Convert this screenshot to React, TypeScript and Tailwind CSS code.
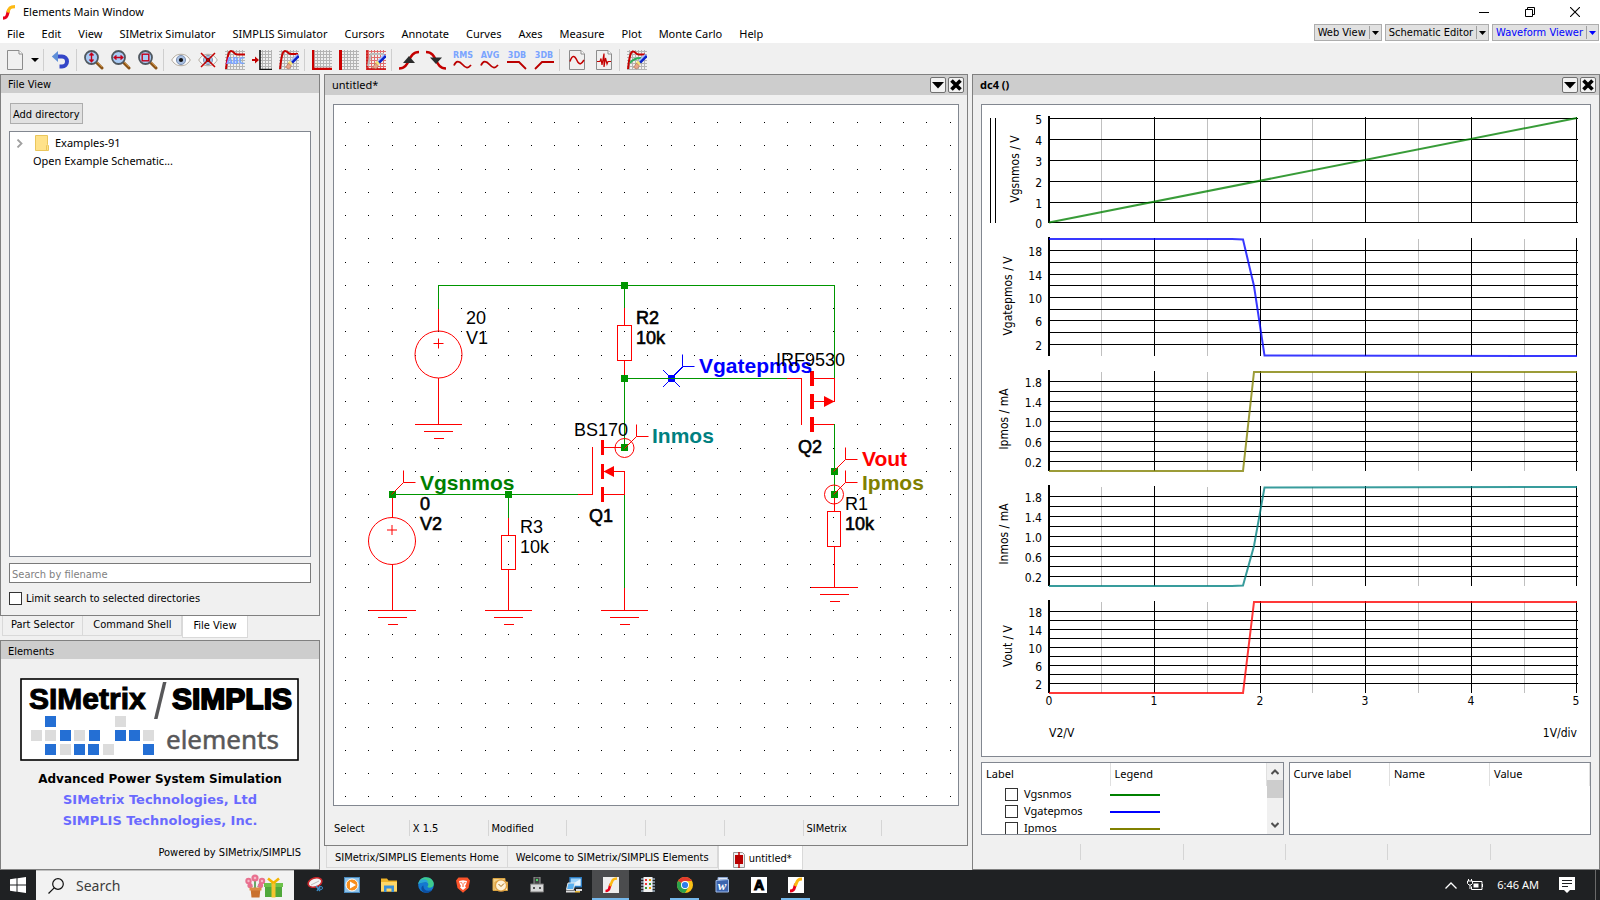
import type { ReactNode } from "react";

const UI = "font-['Noto_Sans','Segoe_UI',sans-serif] text-[11px]";
const TAHOMA = "font-['DejaVu_Sans_Condensed','Tahoma',sans-serif] text-[11px]";

const MENUS = [
  "File", "Edit", "View", "SIMetrix Simulator", "SIMPLIS Simulator", "Cursors", "Annotate",
  "Curves", "Axes", "Measure", "Plot", "Monte Carlo", "Help",
];

/* ---------- toolbar icons (20 x 20) ---------- */

function Icon({ children }: { children: ReactNode }) {
  return (
    <svg viewBox="0 0 20 20" className="block h-5 w-5" aria-hidden="true">
      {children}
    </svg>
  );
}

function Mesh({ x = 0, color = "#b4b4b4", width = 20 }: { x?: number; color?: string; width?: number }) {
  const xs: number[] = [];
  for (let i = x + 2; i < x + width; i += 3) xs.push(i);
  return (
    <g fill={color} shapeRendering="crispEdges">
      {xs.map((v) => <rect key={v} x={v} y="0" width="1" height="20" />)}
      {[1, 4, 7, 10, 13, 16, 19].map((v) => <rect key={v} x={x} y={v} width={width} height="1" />)}
    </g>
  );
}

function Page() {
  return (
    <>
      <path d="M2.500 .5h11.500l3.500 3.500v15.500h-15z" fill="#f0f0f0" stroke="#8c8c8c" />
      <path d="M14 .5v3.500h3.500" fill="#fff" stroke="#8c8c8c" />
    </>
  );
}

function Lens({ children }: { children: ReactNode }) {
  return (
    <Icon>
      <path d="M12.500 12.500L18 18" stroke="#8a5418" strokeWidth="3" strokeLinecap="round" />
      <path d="M13 12L18 17" stroke="#c98a3c" strokeWidth="1" />
      <circle cx="7.500" cy="7.500" r="6.500" fill="#a9cbf5" stroke="#505860" strokeWidth="1.800" />
      <g stroke="#c4001a" fill="none" strokeWidth="1.400">{children}</g>
    </Icon>
  );
}

function Brush() {
  return (
    <>
      <path d="M19.500 5.500L12 13" stroke="#0a22c8" strokeWidth="3.600" />
      <path d="M18.500 4.500L11 12" stroke="#a9c0ff" strokeWidth="1.400" />
      <path d="M12.500 12L10 14.500" stroke="#f4e27a" strokeWidth="4" />
      <path d="M9.500 13l3 3l-2.500 3l-3.500 -1.500z" fill="#e8a58c" stroke="#a06040" strokeWidth=".5" />
    </>
  );
}

function Eye() {
  return (
    <>
      <path d="M.7 10C4 4.800 7 4.300 10 4.300S16 4.800 19.300 10C16 15.200 13 15.700 10 15.700S4 15.200 .7 10z" fill="#fbfbfb" stroke="#b0a89c" />
      <circle cx="10" cy="10" r="4.600" fill="#a9bfe0" stroke="#6f84a8" strokeWidth=".8" />
      <circle cx="10" cy="10" r="2.100" fill="#101010" />
    </>
  );
}

const RED = "#c40000";

function Label({ children }: { children: ReactNode }) {
  return (
    <text x="10" y="7.500" textAnchor="middle" fontFamily="DejaVu Sans" fontWeight="700" fontSize="8" fill="#7aa4ff">
      {children}
    </text>
  );
}

const WAVE = "M1 15.500C3 10.500 6 10.500 9.500 14.500S15 18.500 18 15";

const GROUPS: { name: string; icon: ReactNode }[][] = [
  [{
    name: "Undo",
    icon: <Icon><path d="M5 6.500H11A4.700 4.700 0 0 1 11 16.500H8.500" fill="none" stroke="#3446c8" strokeWidth="4" /><path d="M7 1V12L.8 6.500z" fill="#5f8fd8" /></Icon>,
  }],
  [
    { name: "Zoom vertical", icon: <Lens><path d="M7.500 3.500V11.500M5.500 5.500L7.500 3.200L9.500 5.500M5.500 9.500L7.500 11.800L9.500 9.500" /></Lens> },
    { name: "Zoom horizontal", icon: <Lens><path d="M3.500 7.500H11.500M5.500 5.500L3.200 7.500L5.500 9.500M9.500 5.500L11.800 7.500L9.500 9.500" /></Lens> },
    { name: "Zoom box", icon: <Lens><rect x="4.200" y="4.200" width="6.600" height="6.600" /></Lens> },
  ],
  [
    { name: "Show curves", icon: <Icon><Eye /></Icon> },
    { name: "Hide curves", icon: <Icon><Eye /><path d="M3 3L17 17M17 3L3 17" stroke={RED} strokeWidth="1.500" /></Icon> },
    { name: "Name curve", icon: <Icon><Mesh /><path d="M1 19C2 10 3 1 6 1S9 5 13 4.500H20" fill="none" stroke={RED} strokeWidth="2" /><text x="10.500" y="14" textAnchor="middle" fontFamily="DejaVu Sans" fontWeight="700" fontSize="8" fill="#7aa4ff">ABC</text></Icon> },
    { name: "New axis", icon: <Icon><Mesh x={8} width={12} /><path d="M8 0V19.500H20" fill="none" stroke="#111" strokeWidth="1.600" /><path d="M0 9H3V6.500L7 10L3 13.500V11H0z" fill={RED} /></Icon> },
    { name: "Delete curve", icon: <Icon><Mesh /><path d="M1 19C2 10 3 1 6 1S9 4.500 13 4H19" fill="none" stroke={RED} strokeWidth="2" /><Brush /></Icon> },
  ],
  [
    { name: "New grid", icon: <Icon><Mesh /><path d="M1 0V19H20" fill="none" stroke="#c00" strokeWidth="2.400" /></Icon> },
    { name: "Add y axis", icon: <Icon><Mesh /><path d="M1.500 0V20" stroke="#c00" strokeWidth="3" /></Icon> },
    { name: "Erase grid", icon: <Icon><Mesh color="#e06c6c" /><path d="M1 0V19H20" fill="none" stroke="#c00" strokeWidth="1.500" /><path d="M2 16L5 4H18" stroke="#bbb" fill="none" strokeWidth="2" /><Brush /></Icon> },
  ],
  [
    { name: "Rise time", icon: <Icon><path d="M0 18.500C12 18.500 8 2 20 2" fill="none" stroke={RED} strokeWidth="2.600" /><path d="M10 6L16 13H4z" fill="#2c2c2c" /></Icon> },
    { name: "Fall time", icon: <Icon><path d="M0 2C12 2 8 18.500 20 18.500" fill="none" stroke={RED} strokeWidth="2.600" /><path d="M10 14L16 7.500H4z" fill="#2c2c2c" /></Icon> },
    { name: "RMS", icon: <Icon><Label>RMS</Label><path d={WAVE} fill="none" stroke="#b00" strokeWidth="1.800" /></Icon> },
    { name: "Average", icon: <Icon><Label>AVG</Label><path d={WAVE} fill="none" stroke="#b00" strokeWidth="1.800" /></Icon> },
    { name: "Low pass 3dB", icon: <Icon><Label>3DB</Label><path d="M0 12H12L19 19" fill="none" stroke="#b00" strokeWidth="1.800" /></Icon> },
    { name: "High pass 3dB", icon: <Icon><Label>3DB</Label><path d="M20 12H8L1 19" fill="none" stroke="#b00" strokeWidth="1.800" /></Icon> },
  ],
  [
    { name: "New waveform", icon: <Icon><Page /><path d="M3 11.500C5 5 7.500 5 10 10.500S14.500 14 17 10" fill="none" stroke={RED} strokeWidth="1.500" /></Icon> },
    { name: "New spectrum", icon: <Icon><Page /><path d="M3 11.500H6L7 8.500L8 15L10 3.500V17L11.500 8L13 14L14 11.500H17" fill="none" stroke={RED} strokeWidth="1.200" /></Icon> },
  ],
  [
    { name: "Clear all", icon: <Icon><Mesh /><path d="M1 19C2 10 3 1.500 6 1.500S9 5 12 4.500H18" fill="none" stroke={RED} strokeWidth="2" /><path d="M3 13C6 9 9 8 14 8" fill="none" stroke="#2fae5a" strokeWidth="2" /><Brush /></Icon> },
  ],
];

function Divider() {
  return <div className="ml-0.5 mr-[3px] h-[22px] w-px shrink-0 bg-[#cfcfcf]" />;
}

function Toolbar() {
  return (
    <div className="flex h-[31px] shrink-0 items-center bg-[#f0f0f0] pl-px pt-0.5">
      <button aria-label="New" className="flex h-6 w-[27px] items-center justify-center"><Icon><Page /></Icon></button>
      <button aria-label="New options" className="flex h-6 w-[13px] items-center justify-center">
        <svg viewBox="0 0 8 4" className="h-1 w-2"><path d="M0 0h8l-4 4z" /></svg>
      </button>
      {GROUPS.map((group) => (
        <div key={group[0].name} className="flex items-center">
          <Divider />
          {group.map((tool) => (
            <button key={tool.name} aria-label={tool.name} className="flex h-6 w-[27px] items-center justify-center">
              {tool.icon}
            </button>
          ))}
        </div>
      ))}
    </div>
  );
}

/* ---------- header ---------- */

function Swoosh({ className }: { className: string }) {
  return (
    <svg viewBox="0 0 12 15" className={className} aria-hidden="true">
      <path d="M0 13.200C5.500 13.200 4 8 5.800 5" fill="none" stroke="#e8001c" strokeWidth="3.200" />
      <path d="M4.900 7.500C6 3 7 1.700 12 1.700" fill="none" stroke="#fdb913" strokeWidth="3.200" />
    </svg>
  );
}

function ViewButton({ label, active = false }: { label: string; active?: boolean }) {
  const color = active ? "text-[#0000ff]" : "text-black";
  return (
    <div className={`flex h-[17px] items-center border border-[#adadad] bg-[#e1e1e1] ${color} ${TAHOMA}`}>
      <button className="h-full px-[3px] leading-[15px]">{label}</button>
      <button aria-label={`${label} options`} className="flex h-[13px] w-3 items-center justify-center border-l border-[#a0a0a0]">
        <svg viewBox="0 0 7 4" className="h-1 w-[7px]" fill="currentColor"><path d="M0 0h7l-3.500 4z" /></svg>
      </button>
    </div>
  );
}

function Header() {
  return (
    <header className="shrink-0 bg-white">
      <div className="flex h-6 items-center pl-[3px]">
        <Swoosh className="h-[15px] w-3" />
        <h1 className={`ml-2 flex-1 ${UI}`}>Elements Main Window</h1>
        <div className="flex h-5 items-center">
          <button aria-label="Minimize" className="flex w-[46px] justify-center"><svg viewBox="0 0 10 10" className="h-2.5 w-2.5"><path d="M0 5.500h10" stroke="#000" /></svg></button>
          <button aria-label="Restore" className="flex w-[45px] justify-center"><svg viewBox="0 0 10 10" className="h-2.5 w-2.5" fill="none" stroke="#000"><path d="M.5 2.500h7v7h-7zM2.500 2.500v-2h7v7h-2" /></svg></button>
          <button aria-label="Close" className="flex w-[46px] justify-center"><svg viewBox="0 0 10 10" className="h-2.5 w-2.5"><path d="M0 0L10 10M10 0L0 10" stroke="#000" strokeWidth="1.100" /></svg></button>
          <div className="w-0.5" />
        </div>
      </div>
      <div className="flex h-[19px] items-center justify-between">
        <nav className={`flex gap-[17px] pl-[7px] ${UI}`}>
          {MENUS.map((m) => <button key={m} className="whitespace-nowrap leading-4">{m}</button>)}
        </nav>
        <div className="mb-0.5 flex gap-[3px] pr-px">
          <ViewButton label="Web View" />
          <ViewButton label="Schematic Editor" />
          <ViewButton label="Waveform Viewer" active />
        </div>
      </div>
    </header>
  );
}

/* ---------- panels ---------- */

function PanelTitle({ title, bold = false }: { title: string; bold?: boolean }) {
  return (
    <div className="flex h-5 shrink-0 items-center gap-0.5 bg-[#cdcdcd] pl-[7px] pr-[3px]">
      <h2 className={`flex-1 ${UI} ${bold ? "font-bold" : ""}`}>{title}</h2>
      <button aria-label={`${title} menu`} className="flex h-4 w-4 items-center justify-center rounded-xs border border-[#707070] bg-[#f2f2f2]">
        <svg viewBox="0 0 12 7" className="h-[7px] w-3"><path d="M0 0h12l-6 6.500z" /></svg>
      </button>
      <button aria-label={`Close ${title}`} className="flex h-4 w-4 items-center justify-center rounded-xs border border-[#707070] bg-[#f2f2f2]">
        <svg viewBox="0 0 12 12" className="h-3 w-3"><path d="M1.500 1.500L10.500 10.500M10.500 1.500L1.500 10.500" stroke="#000" strokeWidth="3.600" /></svg>
      </button>
    </div>
  );
}

function Tab({ label, size, icon, active = false }: { label: string; size: string; icon?: ReactNode; active?: boolean }) {
  return (
    <button
      role="tab"
      aria-selected={active}
      className={`flex items-center gap-1 whitespace-nowrap border border-t-0 border-[#d9d9d9] ${size} ${TAHOMA} ${active ? "bg-white" : "border-l-0 bg-[#f0f0f0] first:border-l"}`}
    >
      {icon}
      {label}
    </button>
  );
}

const TILES: [number, number, boolean][] = [
  [45, 716, true], [115, 716, false],
  [31, 730, false], [45, 730, false], [60, 730, true], [74, 730, false], [89, 730, true], [115, 730, true], [129, 730, true], [143, 730, false],
  [45, 744, true], [60, 744, false], [74, 744, true], [88, 744, true], [103, 744, false], [143, 744, true],
];

function Logo() {
  return (
    <svg viewBox="20 678 279 83" className="mr-px block h-[83px] w-[279px]" role="img" aria-label="SIMetrix / SIMPLIS elements">
      <rect x="21" y="679" width="277" height="81" fill="#fff" stroke="#000" strokeWidth="1.600" />
      <text x="29" y="709" fontFamily="Liberation Sans" fontWeight="700" fontSize="30" stroke="#000" strokeWidth="1">SIMetrix</text>
      <path d="M163 682h3.500l-9 37h-3.500z" fill="#58585a" />
      <text x="172" y="709" fontFamily="Liberation Sans" fontWeight="700" fontSize="30" stroke="#000" strokeWidth="1.800" strokeLinejoin="round">SIMPLIS</text>
      {TILES.map(([x, y, blue]) => (
        <rect key={`${x}-${y}`} x={x} y={y} width="11" height="11" fill={blue ? "#246fd4" : "#dcdcdc"} />
      ))}
      <text x="166" y="749" fontFamily="Noto Sans" fontWeight="400" fontSize="26" fill="#58585a" stroke="#58585a" strokeWidth=".5">elements</text>
    </svg>
  );
}

function LeftColumn() {
  return (
    <div className="flex min-h-0 flex-col">
      <section className="flex min-h-0 flex-1 flex-col border border-[#808080]">
        <h2 className={`flex h-[18px] shrink-0 items-center bg-[#cdcdcd] pl-[7px] pt-0.5 ${TAHOMA}`}>File View</h2>
        <div className="flex min-h-0 flex-1 flex-col px-2 pb-2.5 pt-2.5">
          <button className={`ml-px h-[21px] self-start whitespace-nowrap border border-[#adadad] bg-[#e1e1e1] px-0.5 pt-0.5 leading-4 ${TAHOMA}`}>Add directory</button>
          <ul className={`mt-[7px] flex-1 border border-[#828790] bg-white ${UI}`}>
            <li className="flex h-5 items-center pl-1.5 pt-0.5">
              <svg viewBox="0 0 7 9" className="h-[9px] w-[7px]" fill="none"><path d="M1.500 .5L5.500 4.500L1.500 8.500" stroke="#a0a0a0" strokeWidth="1.800" /></svg>
              <svg viewBox="0 0 14 16" className="ml-3 h-4 w-3.5"><path d="M.5 .5h12v9l1 1v5h-13z" fill="#ffe28a" stroke="#eac65c" /><path d="M11.500 15v-4.500h1" stroke="#eac65c" fill="none" /></svg>
              <span className="ml-[6px]">Examples-91</span>
            </li>
            <li className="h-[18px] pl-[23px] leading-[17px]">Open Example Schematic...</li>
          </ul>
          <input
            aria-label="Search by filename"
            placeholder="Search by filename"
            className={`mt-1.5 h-5 w-full border border-[#7a7a7a] bg-white px-0.5 pt-0.5 outline-none placeholder:text-[#7f7f7f] ${TAHOMA}`}
          />
          <label className={`mt-2 flex h-3.5 items-center gap-1 leading-4 ${TAHOMA}`}>
            <input type="checkbox" className="h-[13px] w-[13px] appearance-none border border-[#333] bg-white" />
            <span className="pt-0.5">Limit search to selected directories</span>
          </label>
        </div>
      </section>
      <div role="tablist" className="flex h-6 shrink-0 items-start pl-0.5">
        <Tab label="Part Selector" size="h-5 px-2" />
        <Tab label="Command Shell" size="h-5 px-2.5" />
        <Tab label="File View" size="h-[22px] px-2.5" active />
      </div>
      <section className="flex h-[230px] shrink-0 flex-col border border-[#808080]">
        <h2 className={`flex h-[18px] shrink-0 items-center bg-[#cdcdcd] pl-[7px] pt-1 ${TAHOMA}`}>Elements</h2>
        <div className="flex flex-1 flex-col items-center pt-[19px] font-['DejaVu_Sans','Verdana',sans-serif] text-[13px] font-bold">
          <Logo />
          <p className="mt-2 text-xs leading-5">Advanced Power System Simulation</p>
          <p className="leading-[21px] text-[#6a6aff]">SIMetrix Technologies, Ltd</p>
          <p className="leading-[21px] text-[#6a6aff]">SIMPLIS Technologies, Inc.</p>
          <p className={`mt-3.5 self-end pr-[18px] font-normal leading-4 ${TAHOMA}`}>Powered by SIMetrix/SIMPLIS</p>
        </div>
      </section>
    </div>
  );
}

/* ---------- schematic ---------- */

const WIRE = "#009600";
const PART = "#ff0000";

const range = (n: number) => Array.from({ length: n }, (_, i) => i);

function Ground({ x, y }: { x: number; y: number }) {
  return <path d={`M${x - 23.5} ${y}h47M${x - 14.5} ${y + 7}h29M${x - 5} ${y + 14}h10`} stroke={PART} />;
}

function Node({ x, y, color = WIRE }: { x: number; y: number; color?: string }) {
  return <rect x={x - 3.5} y={y - 3.5} width="7" height="7" fill={color} />;
}

function Probe({ x, y, color = PART }: { x: number; y: number; color?: string }) {
  return <path d={`M${x} ${y}l12 -12v-12m0 12h12`} stroke={color} fill="none" />;
}

function Source({ x, y }: { x: number; y: number }) {
  return (
    <g stroke={PART} fill="none">
      <circle cx={x} cy={y} r="23.500" />
      <path d={`M${x - 5} ${y - 11}h10M${x} ${y - 16}v10`} />
    </g>
  );
}

function T({ x, y, heavy = false, children }: { x: number; y: number; heavy?: boolean; children: ReactNode }) {
  return (
    <text x={x} y={y} fontSize="18" fill="#000" stroke={heavy ? "#000" : "none"} strokeWidth=".6">{children}</text>
  );
}

function Net({ x, y, color, children }: { x: number; y: number; color: string; children: ReactNode }) {
  return <text x={x} y={y} fontSize="21" fontWeight="700" fill={color}>{children}</text>;
}

function Schematic() {
  return (
    <svg viewBox="334 105 624 700" preserveAspectRatio="xMinYMin meet" className="absolute inset-0 h-full w-full" fontFamily="Liberation Sans" role="img" aria-label="Schematic">
      <g fill="#000" shapeRendering="crispEdges">
        {range(30).map((r) => range(27).map((c) => (
          <rect key={`${r}-${c}`} x={345 + Math.round(c * 23.25)} y={122 + Math.round(r * 23.25)} width="1" height="1" />
        )))}
      </g>
      <g stroke={WIRE} fill="none" shapeRendering="crispEdges">
        <path d="M438.500 309V285.500H834.500V378M624.500 285V308M624.500 378V447M624.500 378.500H787M392 494.500H578M508.500 494V518M624.500 494V588M834.500 424V494" />
      </g>
      <g stroke={PART} fill="none" shapeRendering="crispEdges">
        <path d="M438.500 309V331M438.500 378V424M392.500 494V518M392.500 565V610M624.500 308V325M624.500 361V378M508.500 518V535M508.500 570V610M624.500 588V610M834.500 497V511M834.500 547V587" />
        <path d="M617.500 325.500h14v35h-14zM501.500 535.500h14v34h-14zM827.500 511.500h13v35h-13z" />
        <path d="M578 494.500H592.500V447M604 447.500H624M604 471.500H624.500V494.500H604" />
        <path d="M787 378.500H801.500V424.500M814 378.500H834.500V401.500H814M814 424.500H834" />
        <Ground x={438.5} y={424.5} />
        <Ground x={392.5} y={610.5} />
        <Ground x={508.5} y={610.5} />
        <Ground x={624.5} y={610.5} />
        <Ground x={834.5} y={587.5} />
      </g>
      <g fill={PART} shapeRendering="crispEdges">
        <rect x="601" y="440" width="3" height="15" />
        <rect x="601" y="464" width="3" height="15" />
        <rect x="601" y="487" width="3" height="15" />
        <rect x="810" y="371" width="4" height="15" />
        <rect x="810" y="394" width="4" height="15" />
        <rect x="810" y="417" width="4" height="15" />
      </g>
      <path d="M603.500 471.500L614 466v11zM834.500 401.500L824 396v11z" fill={PART} />
      <Source x={438.5} y={354.5} />
      <Source x={392} y={541} />
      <Node x={624.5} y={285.5} />
      <Node x={624.5} y={378.5} />
      <Node x={624.5} y={447.5} />
      <Node x={392.5} y={494.5} />
      <Node x={508.5} y={494.5} />
      <Node x={834.5} y={471.5} />
      <Node x={834.5} y={494.5} />
      <Node x={671.5} y={378.5} color="#0000ff" />
      <path d="M663 370l17 17M663 387L683 367" stroke="#0000ff" />
      <path d="M668 378.500h7" stroke={WIRE} />
      <circle cx="624.500" cy="448" r="9.500" fill="none" stroke={PART} />
      <circle cx="834" cy="494.500" r="9.500" fill="none" stroke={PART} />
      <Probe x={624.5} y={448.5} />
      <Probe x={391.5} y={494.5} />
      <Probe x={833.5} y={471.5} />
      <Probe x={833.5} y={494.5} />
      <Probe x={670.5} y={378.5} color="#0000ff" />
      <T x={466} y={324}>20</T>
      <T x={466} y={344}>V1</T>
      <T x={636} y={324} heavy>R2</T>
      <T x={636} y={344} heavy>10k</T>
      <T x={574} y={436}>BS170</T>
      <T x={589} y={522} heavy>Q1</T>
      <T x={420} y={510} heavy>0</T>
      <T x={420} y={530} heavy>V2</T>
      <T x={520} y={533}>R3</T>
      <T x={520} y={553}>10k</T>
      <Net x={420} y={490} color="#008000">Vgsnmos</Net>
      <Net x={652} y={443} color="#008080">Inmos</Net>
      <Net x={699} y={373} color="#0000ff">Vgatepmos</Net>
      <Net x={862} y={466} color="#ff0000">Vout</Net>
      <Net x={862} y={490} color="#808000">Ipmos</Net>
      <T x={776} y={366}>IRF9530</T>
      <T x={798} y={453} heavy>Q2</T>
      <T x={845} y={510}>R1</T>
      <T x={845} y={530} heavy>10k</T>
    </svg>
  );
}

const STATUS = ["Select", "X 1.5", "Modified", "", "", "", "SIMetrix", ""];

function SchematicColumn() {
  return (
    <div className="flex min-h-0 min-w-0 flex-col">
      <section className="flex min-h-0 flex-1 flex-col border border-[#808080]">
        <PanelTitle title="untitled*" />
        <div className="flex min-h-0 flex-1 px-2 pt-[9px]">
          <div className="relative flex-1 border border-[#828790] bg-white"><Schematic /></div>
        </div>
        <div className={`grid h-[39px] shrink-0 grid-cols-8 items-center px-1.5 pt-1 ${TAHOMA}`}>
          {STATUS.map((s, i) => (
            <div key={i} className="h-4 border-r border-[#d5d5d5] pl-[3px] leading-[17px] last:border-r-0">{s}</div>
          ))}
        </div>
      </section>
      <div role="tablist" className="flex h-6 shrink-0 items-start pl-0.5">
        <Tab label="SIMetrix/SIMPLIS Elements Home" size="h-[22px] px-2 pt-1" />
        <Tab label="Welcome to SIMetrix/SIMPLIS Elements" size="h-[22px] px-2 pt-1" />
        <Tab
          label="untitled*"
          size="h-6 pl-3.5 pr-2.5 pt-1"
          active
          icon={
            <svg viewBox="0 0 12 16" className="h-4 w-3">
              <path d="M.5 .5h9l2 2v13h-11z" fill="#f0f0f0" stroke="#999" />
              <path d="M6 0V16" stroke="#c00000" strokeWidth="1.500" /><path d="M2 3h8v9h-8z" fill="#b80000" />
            </svg>
          }
        />
      </div>
    </div>
  );
}

/* ---------- waveforms ---------- */

type Trace = {
  label: string; labelX: number; labelY: number; color: string; top: number; bottom: number;
  lines: number[]; ticks: [string, number][]; points: string;
};

const TRACES: Trace[] = [
  {
    label: "Vgsnmos / V", labelX: 1019, labelY: 169, color: "#008000", top: 117, bottom: 223,
    lines: [118, 139, 160, 181, 202, 222],
    ticks: [["5", 119], ["4", 140], ["3", 161], ["2", 182], ["1", 203], ["0", 223]],
    points: "1049,222.5 1577,118",
  },
  {
    label: "Vgatepmos / V", labelX: 1012, labelY: 296, color: "#0000ff", top: 238, bottom: 356,
    lines: [250, 262, 274, 285, 297, 309, 320, 332, 344],
    ticks: [["18", 251], ["14", 275], ["10", 298], ["6", 321], ["2", 345]],
    points: "1049,239 1232,239 1243,239.5 1254,286 1264.5,355.5 1577,356",
  },
  {
    label: "Ipmos / mA", labelX: 1008, labelY: 419, color: "#808000", top: 371, bottom: 471,
    lines: [381, 391, 401, 411, 421, 431, 441, 451, 461],
    ticks: [["1.8", 382], ["1.4", 402], ["1.0", 422], ["0.6", 442], ["0.2", 462]],
    points: "1049,471 1243,471 1254,372 1577,372",
  },
  {
    label: "Inmos / mA", labelX: 1008, labelY: 534, color: "#008080", top: 486, bottom: 586,
    lines: [496, 506, 516, 526, 536, 546, 556, 566, 576],
    ticks: [["1.8", 497], ["1.4", 517], ["1.0", 537], ["0.6", 557], ["0.2", 577]],
    points: "1049,586 1232,586 1243,585.5 1254,546 1264.5,487.5 1577,487",
  },
  {
    label: "Vout / V", labelX: 1012, labelY: 646, color: "#ff0000", top: 601, bottom: 693,
    lines: [611, 620, 629, 638, 647, 656, 665, 674, 683],
    ticks: [["18", 612], ["14", 630], ["10", 648], ["6", 666], ["2", 684]],
    points: "1049,693 1243,693 1254,602 1577,602",
  },
];

function Waveforms() {
  return (
    <svg viewBox="982 105 608 651" preserveAspectRatio="xMaxYMin meet" className="absolute inset-0 h-full w-full" fontFamily="DejaVu Sans Condensed" fontSize="12" role="img" aria-label="Waveforms">
      <path d="M990.500 118V223M995.500 118V223" stroke="#000" shapeRendering="crispEdges" />
      {TRACES.map((t) => (
        <g key={t.label}>
          <g shapeRendering="crispEdges">
            {[1101, 1207, 1312, 1418, 1524].map((x) => <rect key={x} x={x} y={t.top + 1} width="1" height={t.bottom - t.top - 1} fill="#c0c0c0" />)}
            {[1154, 1260, 1365, 1471, 1576].map((x) => <rect key={x} x={x} y={t.top} width="1" height={t.bottom - t.top} fill="#000" />)}
            {t.lines.map((y) => <rect key={y} x="1049" y={y} width="529" height="1" fill="#000" />)}
            <rect x="1048" y={t.top - 1} width="2" height={t.bottom - t.top + 1} fill="#000" />
          </g>
          <polyline points={t.points} fill="none" stroke={t.color} strokeWidth="2" opacity=".78" />
          {t.ticks.map(([s, y]) => <text key={s} x="1042" y={y + 5} textAnchor="end">{s}</text>)}
          <text fontSize="12" transform={`translate(${t.labelX} ${t.labelY}) rotate(-90)`} textAnchor="middle">{t.label}</text>
        </g>
      ))}
      {[1049, 1154, 1260, 1365, 1471, 1576].map((x, i) => <text key={x} x={x} y="705" textAnchor="middle">{i}</text>)}
      <text x="1049" y="737">V2/V</text>
      <text x="1577" y="737" textAnchor="end">1V/div</text>
    </svg>
  );
}

const CURVES: [string, string][] = [["Vgsnmos", "bg-[#008000]"], ["Vgatepmos", "bg-[#0000ff]"], ["Ipmos", "bg-[#808000]"]];

function Chevron({ d }: { d: string }) {
  return <svg viewBox="0 0 8 6" className="h-1.5 w-2" fill="none"><path d={d} stroke="#505050" strokeWidth="2" /></svg>;
}

function WaveColumn() {
  return (
    <section className="flex min-h-0 min-w-0 flex-col border border-[#808080]">
      <PanelTitle title="dc4 ()" bold />
      <div className="flex min-h-0 flex-1 px-2 pt-[9px]">
        <div className="relative flex-1 border border-[#828790] bg-white"><Waveforms /></div>
      </div>
      <div className={`mt-[5px] grid h-[73px] shrink-0 grid-cols-2 gap-[5px] px-2 ${UI}`}>
        <div className="flex overflow-hidden border border-[#828790] bg-white">
          <table className="h-fit flex-1 table-fixed border-collapse text-left">
            <thead>
              <tr className="h-[23px]">
                <th className="w-[128px] border-r border-[#e0e0e0] pl-1 font-normal">Label</th>
                <th className="border-r border-[#e0e0e0] pl-1 font-normal">Legend</th>
              </tr>
            </thead>
            <tbody>
              {CURVES.map(([name, color]) => (
                <tr key={name} className="h-[17px]">
                  <td className="p-0">
                    <label className="flex h-[17px] items-center gap-1.5 pl-[23px]">
                      <input type="checkbox" className="h-[13px] w-[13px] appearance-none border border-[#333] bg-white" />
                      {name}
                    </label>
                  </td>
                  <td className="p-0"><div className={`h-0.5 w-[50px] ${color}`} /></td>
                </tr>
              ))}
            </tbody>
          </table>
          <div className="flex w-4 shrink-0 flex-col items-center bg-[#f0f0f0] py-1.5">
            <button aria-label="Scroll up"><Chevron d="M.5 5L4 1.500L7.500 5" /></button>
            <div className="mt-[5px] h-[18px] w-full bg-[#cdcdcd]" />
            <div className="flex-1" />
            <button aria-label="Scroll down"><Chevron d="M.5 1L4 4.500L7.500 1" /></button>
          </div>
        </div>
        <div className="border border-[#828790] bg-white">
          <table className="w-full table-fixed border-collapse text-left">
            <thead>
              <tr className="h-[23px]">
                {["Curve label", "Name", "Value"].map((h) => (
                  <th key={h} className="border-r border-[#e0e0e0] pl-1 font-normal">{h}</th>
                ))}
              </tr>
            </thead>
          </table>
        </div>
      </div>
      <div className="grid h-[34px] shrink-0 grid-cols-6 items-center pl-1.5 pr-1.5">
        {range(6).map((i) => <div key={i} className="h-4 border-r border-[#d5d5d5] last:border-r-0" />)}
      </div>
    </section>
  );
}

/* ---------- taskbar ---------- */

const APPS: { name: string; state?: "active" | "open"; art: ReactNode }[] = [
  { name: "Snipping Tool", art: <><ellipse cx="8" cy="5.500" rx="7" ry="4.500" fill="#f4f4f4" stroke="#c8282c" strokeWidth="1.600" transform="rotate(-18 8 5.500)" /><path d="M4 8l8 -4" stroke="#bbb" /><path d="M9 9l4 5M13 9l-3 5" stroke="#3d8ec9" strokeWidth="1.400" /><circle cx="14" cy="11" r="1.500" fill="none" stroke="#3d8ec9" /></> },
  { name: "Media Player", art: <><rect x=".5" y=".5" width="15" height="15" fill="#8fc3e8" stroke="#4b8cc0" /><circle cx="8" cy="8" r="6" fill="#f78f1e" stroke="#fff" /><path d="M6 4.500l6 3.500l-6 3.500z" fill="#fff" /></> },
  { name: "File Explorer", art: <><path d="M0 1.500h6l1.500 2h8.500v11h-16z" fill="#f0b429" /><path d="M0 5h16v9.500h-16z" fill="#ffd868" /><path d="M3 15v-6.500h10v6.500h-2.500v-3.500h-5v3.500z" fill="#3b90d8" /></> },
  { name: "Edge", art: <><circle cx="8" cy="8" r="7.800" fill="#1478d0" /><path d="M.3 7C1 2.500 4 .2 8 .2c5 0 7.800 3.500 7.800 6.500c0 2.500-1.800 4-4.300 4c-2 0-2.500-1-1.500-2c.8-1 .5-3.700-2.800-3.700C3.500 5 1.500 6 .3 7z" fill="#3ecb8e" /><path d="M.3 7C1 3.500 4 1.500 7.500 2.500C9 3 10 4 10.300 6C9.500 5.200 8.500 5 7.200 5C3.500 5 1.500 6 .3 7z" fill="#2aa6d8" /><path d="M5.500 8.500c-.5 4 3 6.500 8.500 4.500c-3 4-8 3.500-10 .5c-1.500-2.500 0-4.800 1.500-5z" fill="#0c4ea0" /></> },
  { name: "Brave", art: <><path d="M3.500 .5h9l2.500 3l-1.500 7.500l-5.500 4.800l-5.500-4.800l-1.500-7.500z" fill="#fb542b" /><path d="M4 4l4-.8l4 .8l-1 3.500l-1 1.500l1 1.500l-3 2.500l-3-2.500l1-1.500l-1-1.500z" fill="#fff" /><path d="M5.500 5.500l2 .8M10.500 5.500l-2 .8M8 7v3" stroke="#fb542b" /></> },
  { name: "Outlook", art: <><path d="M1 1.500h12v12h-12z" fill="#f5d28a" stroke="#d9a441" /><path d="M3 5h12.500v8.500h-12.500z" fill="#fff3d6" stroke="#d9a441" /><circle cx="9" cy="8.500" r="5.600" fill="#fdf2d8" stroke="#dfa040" strokeWidth="1.400" /><path d="M6.500 7l2.500 2.500l3-3" stroke="#a86b10" fill="none" /></> },
  { name: "USB Drive", art: <><path d="M5 0h6v8h-6z" fill="#444" stroke="#999" /><rect x="7" y="2" width="2" height="2" fill="#4cd964" /><path d="M1.500 7h13v8h-13z" fill="#d8d8d8" stroke="#777" /><path d="M4 10h2v2h-2zM10 10h2v2h-2z" fill="#555" /></> },
  { name: "Remote Desktop", art: <><rect x="4" y=".7" width="11.300" height="9" fill="#9bd2fa" stroke="#2c7bc0" strokeWidth="1.400" /><path d="M5 8L14.500 2V8.500z" fill="#e4f4ff" /><path d="M2 6h7l-1.500 6.500h-7z" fill="#58b0f0" stroke="#e8e8e8" /><path d="M0 14.500h9M10 13h6" stroke="#ddd" strokeWidth="2" /><path d="M9 14.800h5" stroke="#f0c040" strokeWidth="1.500" /></> },
  { name: "SIMetrix", state: "active", art: <><rect width="16" height="16" fill="#eee" /><path d="M2.500 14C8 14 5.500 9.500 8 7" fill="none" stroke="#e8001c" strokeWidth="2.600" /><path d="M7 9C9.500 5 8.500 1.500 14 1.500" fill="none" stroke="#fdb913" strokeWidth="2.600" /></> },
  { name: "Device Programmer", art: <><path d="M1 2h3M1 5h3M1 8h3M1 11h3M1 14h3M12 2h3M12 5h3M12 8h3M12 11h3M12 14h3" stroke="#9ab" strokeWidth="1.500" /><rect x="3.500" y="0" width="9" height="15" fill="#f2f2f2" /><path d="M5 3h2M5 7h2" stroke="#e33" strokeWidth="2" /><path d="M9 3h2M9 11h2" stroke="#e90" strokeWidth="2" /><path d="M9 7h2M5 11h2" stroke="#393" strokeWidth="2" /></> },
  { name: "Chrome", state: "open", art: <><circle cx="8" cy="8" r="8" fill="#fbc116" /><path d="M8 8L1.070 4A8 8 0 0 1 14.930 4H8z" fill="#e33b2e" /><path d="M1.070 4A8 8 0 0 0 8 16L11.500 10L8 8z" fill="#2ba24c" /><circle cx="8" cy="8" r="4" fill="#fff" /><circle cx="8" cy="8" r="3.100" fill="#2f7de9" /></> },
  { name: "Word", art: <><path d="M4 .5h9.500v13h-9.500z" fill="#dfe9f8" stroke="#8aa4d0" /><path d="M6 3h6M6 5h6" stroke="#8aa4d0" /><path d="M2 3.500l12.500-1v12.500h-12.500z" fill="#3c64ae" stroke="#9db8e4" /><text x="8" y="13" textAnchor="middle" fontFamily="Liberation Serif" fontWeight="700" fontStyle="italic" fontSize="13" fill="#fff">w</text></> },
  { name: "Arena", art: <><rect width="16" height="16" fill="#fff" /><text x="8" y="13" textAnchor="middle" fontFamily="Liberation Sans" fontWeight="700" fontSize="14" stroke="#000" strokeWidth="1.200">A</text></> },
  { name: "SIMPLIS", state: "open", art: <><rect width="16" height="16" fill="#fff" /><path d="M2 14C8 14 5.500 9.500 8 7" fill="none" stroke="#e8001c" strokeWidth="3" /><path d="M7 9C9.500 5 8.500 2 14 2" fill="none" stroke="#fdb913" strokeWidth="3" /></> },
];

function Taskbar() {
  return (
    <footer className="flex h-[30px] shrink-0 bg-[#1f2123]">
      <button aria-label="Start" className="flex w-9 items-center justify-center">
        <svg viewBox="0 0 16 16" className="h-4 w-4" fill="#fff"><path d="M0 2.200L6.500 1.300V7.500H0zM7.500 1.200L16 0V7.500H7.500zM0 8.500H6.500V14.700L0 13.800zM7.500 8.500H16V16L7.500 14.800z" /></svg>
      </button>
      <label className="flex w-[258px] items-center border-t border-[#c0c0c0] bg-[#f2f2f2] pl-3 pr-2.5">
        <svg viewBox="0 0 16 16" className="h-4 w-4" fill="none" stroke="#111" strokeWidth="1.200"><circle cx="10" cy="6" r="5.300" /><path d="M6.200 9.800L.5 15.500" /></svg>
        <input aria-label="Search" placeholder="Search" className="ml-3 min-w-0 flex-1 bg-transparent font-['Noto_Sans','Segoe_UI',sans-serif] text-sm outline-none placeholder:text-[#3c3c3c]" />
        <svg viewBox="0 0 40 24" className="h-6 w-10" aria-hidden="true">
          <path d="M11 14V6M8 13L5 8M14 13L17 7" stroke="#3f8f3a" strokeWidth="1.500" />
          <g fill="#e8708f"><circle cx="11" cy="4" r="3.600" /><circle cx="4.500" cy="7" r="3.200" /><circle cx="18" cy="7" r="3.200" /><circle cx="6" cy="11.500" r="2.600" /><circle cx="16.500" cy="11.500" r="2.600" /></g>
          <g fill="#f7b6c6"><circle cx="11" cy="4" r="1.300" /><circle cx="4.500" cy="7" r="1.200" /><circle cx="18" cy="7" r="1.200" /></g>
          <path d="M6.500 14h10l-1 9.500h-8z" fill="#c9712e" /><path d="M5.500 13.500h12v3h-12z" fill="#dd8a44" />
          <path d="M21 11h17v12h-17z" fill="#4fa83a" /><path d="M20 9h19v4h-19z" fill="#6cc24a" />
          <path d="M27.500 9h4v14.500h-4z" fill="#f4c430" /><path d="M29.500 9L24 4.500M29.500 9L35 4.500" stroke="#f4b400" strokeWidth="2.600" />
        </svg>
      </label>
      <div className="flex pl-0.5">
        {APPS.map((app) => (
          <button
            key={app.name}
            aria-label={app.name}
            className={`relative flex w-[37px] items-center justify-center ${app.state === "active" ? "bg-[#4b4c4e]" : ""}`}
          >
            <svg viewBox="0 0 16 16" className="h-4 w-4">{app.art}</svg>
            {app.state === "active" && <span className="absolute inset-x-0 bottom-0 h-0.5 bg-[#76b9ed]" />}
            {app.state === "open" && <span className="absolute inset-x-1 bottom-0 h-0.5 bg-[#76b9ed]" />}
          </button>
        ))}
      </div>
      <div className="ml-auto flex items-center text-white">
        <button aria-label="Hidden icons"><svg viewBox="0 0 12 7" className="h-[7px] w-3" fill="none"><path d="M.5 6.500L6 1L11.500 6.500" stroke="#fff" strokeWidth="1.300" /></svg></button>
        <svg viewBox="0 0 17 12" className="ml-2.5 h-3 w-[17px]" aria-label="Battery charging" fill="none" stroke="#fff">
          <path d="M6 2.500h9v8h-10.500v-3M15.500 5v3M1.500 0v2M4.500 0v2M.5 2h5v2.500l-1.500 1.500h-2l-1.500-1.500zM3 6v4" /><path d="M6.500 4.500h5v4h-5z" fill="#fff" stroke="none" />
        </svg>
        <time className="ml-[13px] whitespace-nowrap font-['Noto_Sans','Segoe_UI',sans-serif] text-[11px]">6:46 AM</time>
        <button aria-label="Notifications" className="ml-5">
          <svg viewBox="0 0 16 16" className="h-4 w-4"><path d="M0 0h16v13h-5l-3 3l-3-3h-5z" fill="#fff" /><path d="M3 3.500h10M3 6.500h10M3 9.500h6" stroke="#1f2123" /></svg>
        </button>
        <div className="ml-5 mr-1 h-[30px] w-px bg-[#6a6a6a]" />
      </div>
    </footer>
  );
}

export default function App() {
  return (
    <div className="flex h-screen flex-col overflow-hidden bg-[#f0f0f0] text-black">
      <Header />
      <Toolbar />
      <main className="grid min-h-0 flex-1 grid-cols-[320px_644fr_628fr] grid-rows-[minmax(0,1fr)] gap-1">
        <LeftColumn />
        <SchematicColumn />
        <WaveColumn />
      </main>
      <Taskbar />
    </div>
  );
}
